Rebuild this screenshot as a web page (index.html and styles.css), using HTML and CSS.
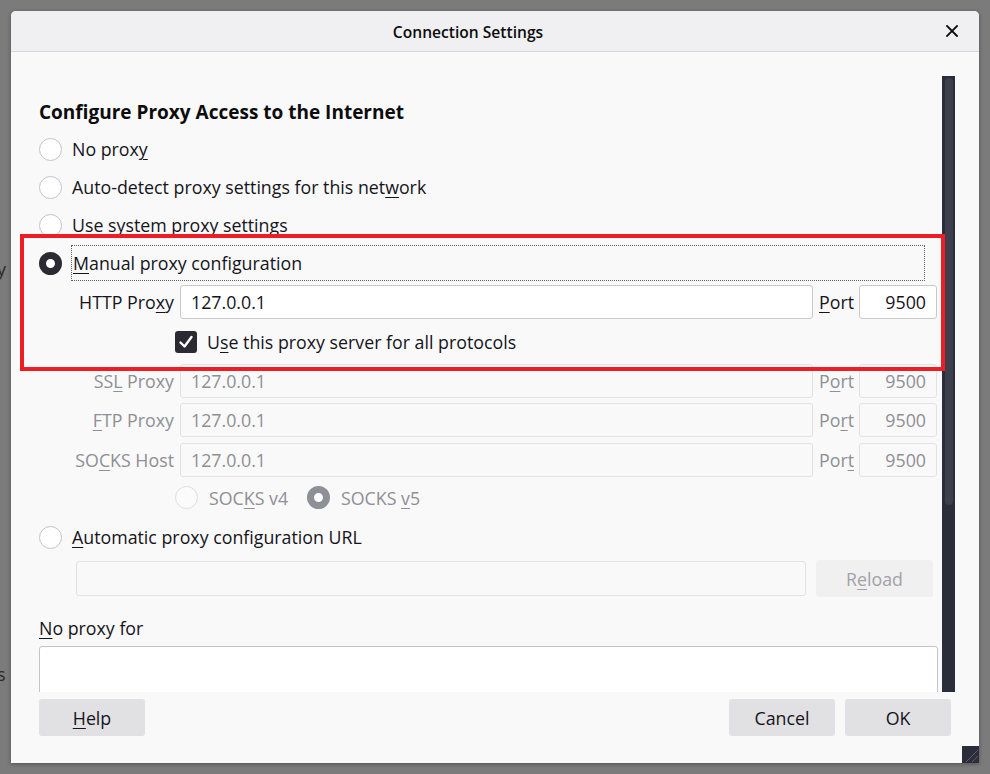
FILE: index.html
```html
<!DOCTYPE html>
<html>
<head>
<meta charset="utf-8">
<title>Connection Settings</title>
<link rel="stylesheet" href="styles.css">
</head>
<body>
<span class="bg-frag frag-y">y</span>
<span class="bg-frag frag-s">s</span>
<div class="dialog">
  <header class="titlebar">
    <div class="title">Connection Settings</div>
    <button class="close" aria-label="Close">
      <svg width="12" height="12" viewBox="0 0 12 12"><path d="M1 1L11 11M11 1L1 11" stroke="#0c0c0d" stroke-width="1.8" stroke-linecap="square"/></svg>
    </button>
  </header>
  <div class="main">
    <div class="scroll">
      <h2 class="heading">Configure Proxy Access to the Internet</h2>
      <div class="radio-row"><span class="radio"></span><span>No prox<u>y</u></span></div>
      <div class="radio-row"><span class="radio"></span><span>Auto-detect proxy settings for this net<u>w</u>ork</span></div>
      <div class="radio-row"><span class="radio"></span><span>Use system proxy settings</span></div>
      <div class="radio-row manual"><span class="radio checked"></span><span class="focus-label"><u>M</u>anual proxy configuration</span></div>

      <div class="field-row first">
        <span class="field-label">HTTP Pro<u>x</u>y</span>
        <span class="text-input">127.0.0.1</span>
        <span class="port-label"><u>P</u>ort</span>
        <span class="text-input port">9500</span>
      </div>
      <div class="check-row">
        <span class="checkbox"><svg width="22" height="22" viewBox="0 0 22 22"><path d="M5.5 11.5L9.5 15.5L16.5 6" fill="none" stroke="#fff" stroke-width="2.4" stroke-linecap="round" stroke-linejoin="round"/></svg></span>
        <span>U<u>s</u>e this proxy server for all protocols</span>
      </div>
      <div class="field-row disabled">
        <span class="field-label">SS<u>L</u> Proxy</span>
        <span class="text-input">127.0.0.1</span>
        <span class="port-label">P<u>o</u>rt</span>
        <span class="text-input port">9500</span>
      </div>
      <div class="field-row disabled gap5">
        <span class="field-label"><u>F</u>TP Proxy</span>
        <span class="text-input">127.0.0.1</span>
        <span class="port-label">Po<u>r</u>t</span>
        <span class="text-input port">9500</span>
      </div>
      <div class="field-row disabled gap6">
        <span class="field-label">SO<u>C</u>KS Host</span>
        <span class="text-input">127.0.0.1</span>
        <span class="port-label">Por<u>t</u></span>
        <span class="text-input port">9500</span>
      </div>
      <div class="socks-row disabled">
        <span class="radio dis"></span><span class="sv-label">SOC<u>K</u>S v4</span>
        <span class="radio dis-checked"></span><span>SOCKS <u>v</u>5</span>
      </div>
      <div class="radio-row"><span class="radio"></span><span><u>A</u>utomatic proxy configuration URL</span></div>
      <div class="url-row">
        <span class="text-input url disabled-input"></span>
        <button class="btn reload">R<u>e</u>load</button>
      </div>
      <div class="noproxy-label"><u>N</u>o proxy for</div>
      <div class="textarea"></div>
    </div>
    <div class="scrollbar"><div class="thumb"></div></div>
  </div>
  <footer class="footer">
    <button class="btn"><u>H</u>elp</button>
    <span class="spacer"></span>
    <button class="btn">Cancel</button>
    <button class="btn">OK</button>
  </footer>
  <div class="grip">
    <svg width="17" height="17" viewBox="0 0 17 17"><path d="M4 16L16 4M10 16L16 10" stroke="#5a5d6a" stroke-width="1"/></svg>
  </div>
</div>
<div class="annotation"></div>
</body>
</html>
```
FILE: styles.css
```css
* { box-sizing: border-box; }

body {
  margin: 0;
  padding: 11px 0 0 11px;
  width: 990px;
  height: 774px;
  overflow: hidden;
  background: #7b7b7b;
  font-family: "Open Sans", "Noto Sans", sans-serif;
  font-size: 17.8px;
  position: relative;
  color: #15141a;
}

u { text-decoration-thickness: 1px; text-underline-offset: 3px; }

.bg-frag {
  position: absolute;
  color: #2a2a2a;
  font-size: 18px;
  line-height: 20px;
}
.frag-y { left: -3px; top: 259px; }
.frag-s { left: -3px; top: 664px; }

.dialog {
  position: relative;
  width: 968px;
  height: 752px;
  background: #f9f9fa;
  display: flex;
  flex-direction: column;
  border-radius: 5px 5px 0 0;
  box-shadow: 0 1px 4px rgba(0, 0, 0, 0.35);
}

.titlebar {
  height: 41px;
  flex: none;
  background: #f0f0f2;
  border-bottom: 1px solid #d6d6d8;
  border-radius: 5px 5px 0 0;
  display: flex;
  align-items: center;
}
.title {
  flex: 1;
  text-align: center;
  font-weight: 600;
  font-size: 15.6px;
  color: #0c0c0d;
  padding-top: 1px;
}
.close {
  width: 54px;
  height: 40px;
  border: 0;
  background: none;
  padding: 0;
  display: flex;
  align-items: center;
  justify-content: center;
}

.main {
  display: flex;
  height: 640px;
  flex: none;
}
.scroll {
  width: 931px;
  height: 640px;
  overflow: hidden;
  padding: 48px 4px 0 28px;
}
.scrollbar {
  width: 13px;
  margin-top: 24px;
  background: #2b2d3a;
  padding: 2px 2px 0 3px;
}
.thumb {
  height: 427px;
  background: #3d404c;
  border-radius: 4px;
}

.heading {
  margin: 0 0 6px;
  font-size: 19px;
  line-height: 24px;
  font-weight: 700;
  color: #0c0c0d;
}

.radio-row {
  display: flex;
  align-items: center;
  height: 38px;
  gap: 10px;
}
.radio {
  width: 23px;
  height: 23px;
  flex: none;
  border-radius: 50%;
  border: 1px solid #c2c2ca;
  background: #fff;
}
.radio.checked {
  border: 7px solid #2b2a33;
}
.radio.dis {
  border-color: #dedee2;
  background: #fbfbfb;
}
.radio.dis-checked {
  border: 7px solid #8f8f97;
  background: #fff;
}
.manual { gap: 9px; }
.focus-label {
  flex: 1;
  height: 36px;
  margin-right: 13px;
  border: 1px dotted #606060;
  display: flex;
  align-items: center;
  padding-left: 1px;
}

.field-row {
  display: flex;
  align-items: center;
  height: 34px;
}
.field-row.first { margin-top: 3px; }
.field-row.gap5 { margin-top: 5px; }
.field-row.gap6 { margin-top: 6px; }
.field-label {
  width: 135px;
  margin-right: 6px;
  text-align: right;
  white-space: nowrap;
}
.port-label {
  width: 34px;
  margin: 0 6px;
  white-space: nowrap;
}
.text-input {
  width: 633px;
  height: 34px;
  border: 1px solid #c8c8cc;
  border-radius: 3px;
  background: #fff;
  padding: 0 10px;
  display: flex;
  align-items: center;
}
.text-input.port {
  width: 78px;
  justify-content: flex-end;
}
.disabled { color: #8f8f94; }
.disabled .text-input,
.disabled-input {
  background: #f9f9fa;
  border-color: #e2e2e5;
}

.check-row {
  display: flex;
  align-items: center;
  height: 45px;
  padding-left: 136px;
  gap: 10px;
}
.checkbox {
  width: 22px;
  height: 22px;
  flex: none;
  border-radius: 3px;
  background: #2b2a33;
  display: flex;
}

.socks-row {
  display: flex;
  align-items: center;
  height: 41px;
  padding-left: 136px;
  gap: 11px;
}
.sv-label { width: 87px; }

.url-row {
  display: flex;
  align-items: center;
  height: 37px;
  margin-top: 4px;
  padding-left: 37px;
  gap: 10px;
}
.text-input.url {
  width: 730px;
  height: 35px;
}

.btn {
  width: 106px;
  height: 37px;
  flex: none;
  border: 0;
  border-radius: 3px;
  background: #e1e1e3;
  font-family: inherit;
  font-size: 17.8px;
  color: #15141a;
  padding: 0;
}
.btn.reload {
  width: 117px;
  background: #f0f0f1;
  color: #a2a2a6;
}

.noproxy-label {
  margin-top: 19px;
  line-height: 24px;
}
.textarea {
  margin-top: 6px;
  width: 899px;
  height: 200px;
  background: #fff;
  border: 1px solid #c4c4c8;
  border-radius: 3px;
}

.footer {
  height: 71px;
  flex: none;
  display: flex;
  gap: 10px;
  padding: 7px 28px 0 28px;
}
.spacer { flex: 1; }

.grip {
  position: absolute;
  right: 0;
  bottom: 0;
  width: 17px;
  height: 17px;
  background: #2b2d3a;
}
.grip svg { display: block; }

.annotation {
  position: absolute;
  left: 20px;
  top: 234px;
  width: 925px;
  height: 137px;
  border: 4px solid #ee1c25;
  pointer-events: none;
}
```
